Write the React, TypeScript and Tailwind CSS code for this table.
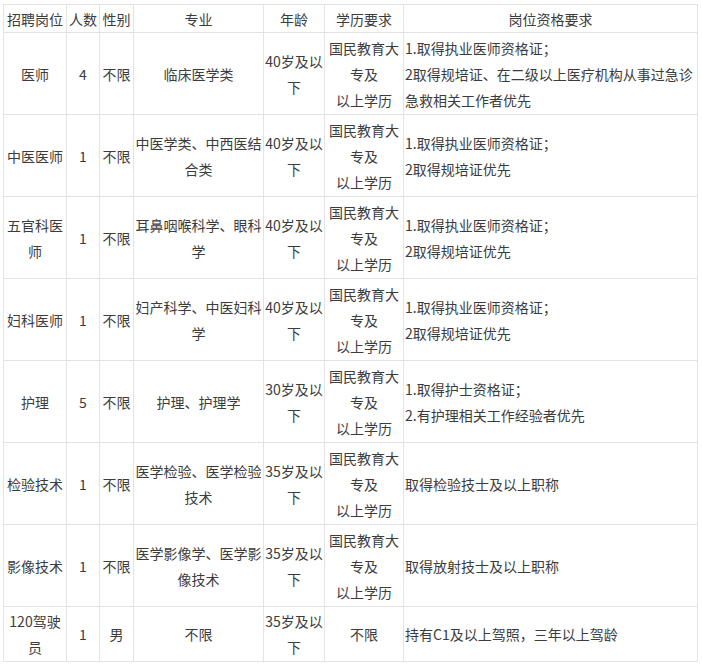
import React from "react";

type Row = {
  pos: React.ReactNode;
  num: string;
  sex: string;
  major: React.ReactNode;
  age: React.ReactNode;
  edu: React.ReactNode;
  req: React.ReactNode;
  last?: boolean;
};

const EDU = (
  <>
    国民教育大
    <br />
    专及
    <br />
    以上学历
  </>
);

const rows: Row[] = [
  {
    pos: "医师",
    num: "4",
    sex: "不限",
    major: "临床医学类",
    age: (
      <>
        40岁及以
        <br />下
      </>
    ),
    edu: EDU,
    req: (
      <>
        1.取得执业医师资格证；
        <br />
        2取得规培证、在二级以上医疗机构从事过急诊
        <br />
        急救相关工作者优先
      </>
    ),
  },
  {
    pos: "中医医师",
    num: "1",
    sex: "不限",
    major: (
      <>
        中医学类、中西医结
        <br />
        合类
      </>
    ),
    age: (
      <>
        40岁及以
        <br />下
      </>
    ),
    edu: EDU,
    req: (
      <>
        1.取得执业医师资格证；
        <br />
        2取得规培证优先
      </>
    ),
  },
  {
    pos: (
      <>
        五官科医
        <br />
        师
      </>
    ),
    num: "1",
    sex: "不限",
    major: (
      <>
        耳鼻咽喉科学、眼科
        <br />
        学
      </>
    ),
    age: (
      <>
        40岁及以
        <br />下
      </>
    ),
    edu: EDU,
    req: (
      <>
        1.取得执业医师资格证；
        <br />
        2取得规培证优先
      </>
    ),
  },
  {
    pos: "妇科医师",
    num: "1",
    sex: "不限",
    major: (
      <>
        妇产科学、中医妇科
        <br />
        学
      </>
    ),
    age: (
      <>
        40岁及以
        <br />下
      </>
    ),
    edu: EDU,
    req: (
      <>
        1.取得执业医师资格证；
        <br />
        2取得规培证优先
      </>
    ),
  },
  {
    pos: "护理",
    num: "5",
    sex: "不限",
    major: "护理、护理学",
    age: (
      <>
        30岁及以
        <br />下
      </>
    ),
    edu: EDU,
    req: (
      <>
        1.取得护士资格证；
        <br />
        2.有护理相关工作经验者优先
      </>
    ),
  },
  {
    pos: "检验技术",
    num: "1",
    sex: "不限",
    major: (
      <>
        医学检验、医学检验
        <br />
        技术
      </>
    ),
    age: (
      <>
        35岁及以
        <br />下
      </>
    ),
    edu: EDU,
    req: "取得检验技士及以上职称",
  },
  {
    pos: "影像技术",
    num: "1",
    sex: "不限",
    major: (
      <>
        医学影像学、医学影
        <br />
        像技术
      </>
    ),
    age: (
      <>
        35岁及以
        <br />下
      </>
    ),
    edu: EDU,
    req: "取得放射技士及以上职称",
  },
  {
    pos: (
      <>
        120驾驶
        <br />
        员
      </>
    ),
    num: "1",
    sex: "男",
    major: "不限",
    age: (
      <>
        35岁及以
        <br />下
      </>
    ),
    edu: "不限",
    req: "持有C1及以上驾照，三年以上驾龄",
    last: true,
  },
];

export default function App() {
  const cell =
    "border border-[#e3e3e3] px-0 text-center align-middle whitespace-nowrap";
  const dataPad = "py-[1.5px] leading-[26px]";
  const lastPad = "py-px leading-[26px]";
  return (
    <div
      className="min-h-[664px] w-[702px] bg-white pl-[3px] pt-[4px] text-[14px] text-[#3c3c3c]"
      style={{ fontFamily: '"Noto Sans CJK SC", "Noto Sans", sans-serif' }}
    >
      <table className="w-[694px] table-fixed border-collapse">
        <colgroup>
          <col className="w-[63px]" />
          <col className="w-[33px]" />
          <col className="w-[34px]" />
          <col className="w-[130px]" />
          <col className="w-[61px]" />
          <col className="w-[79px]" />
          <col className="w-[294px]" />
        </colgroup>
        <thead>
          <tr>
            {["招聘岗位", "人数", "性别", "专业", "年龄", "学历要求", "岗位资格要求"].map(
              (h) => (
                <th
                  key={h}
                  className={`${cell} py-[1.5px] font-normal leading-[24px]`}
                >
                  {h}
                </th>
              )
            )}
          </tr>
        </thead>
        <tbody>
          {rows.map((r, i) => {
            const pad = r.last ? lastPad : dataPad;
            return (
              <tr key={i}>
                <td className={`${cell} ${pad}`}>{r.pos}</td>
                <td className={`${cell} ${pad}`}>{r.num}</td>
                <td className={`${cell} ${pad}`}>{r.sex}</td>
                <td className={`${cell} ${pad}`}>{r.major}</td>
                <td className={`${cell} ${pad}`}>{r.age}</td>
                <td className={`${cell} ${pad}`}>{r.edu}</td>
                <td
                  className={`border border-[#e3e3e3] pl-px text-left align-middle whitespace-nowrap ${pad}`}
                >
                  {r.req}
                </td>
              </tr>
            );
          })}
        </tbody>
      </table>
    </div>
  );
}
